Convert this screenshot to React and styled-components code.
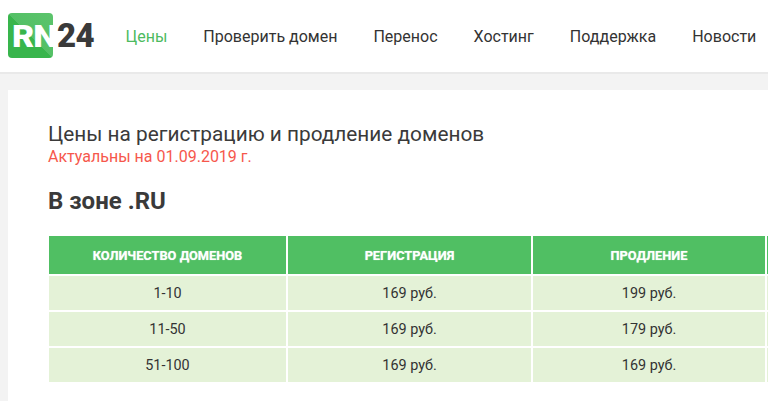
import styled, { createGlobalStyle } from "styled-components";

const GlobalStyle = createGlobalStyle`
  html, body {
    margin: 0;
    height: 401px;
    overflow: hidden;
    background: #f3f3f3;
    font-family: "Roboto", "Liberation Sans", sans-serif;
    color: #333;
  }
`;

const Header = styled.header`
  display: flex;
  align-items: center;
  height: 72px;
  padding-left: 8px;
  background: #fff;
  border-bottom: 2px solid #e9e9e9;
`;

const Logo = styled.a`
  display: flex;
  align-items: center;
  width: 118px;
  flex-shrink: 0;
  margin-top: -1px;
`;

const LogoMark = styled.span`
  display: block;
  width: 45px;
  height: 45px;
  padding: 8px 0 0 4px;
  box-sizing: border-box;
  border-radius: 4px;
  background: linear-gradient(45deg, #38b54c 0%, #38b54c 50%, #54c066 50%, #5cc46c 100%);
`;

const LogoLetters = styled.span`
  display: block;
  color: #fff;
  font-size: 31px;
  font-weight: 900;
  line-height: 31px;
  letter-spacing: -1px;
  white-space: nowrap;
  transform: scaleX(1.1);
  transform-origin: left center;
`;

const LogoDigits = styled.span`
  margin-left: 4px;
  color: #3a3a3a;
  font-size: 33px;
  font-weight: 900;
  letter-spacing: -0.7px;
`;

const Nav = styled.nav`
  display: flex;
  gap: 36px;
  margin-left: -0.5px;
  white-space: nowrap;
`;

const NavLink = styled.a`
  font-size: 16px;
  color: ${(p) => (p.$active ? "#4dbb5f" : "#333")};
`;

const Panel = styled.main`
  margin: 16px 0 0 8px;
  padding: 31px 0 0 40px;
  background: #fff;
  height: 320px;
`;

const Title = styled.div`
  font-size: 20.8px;
  line-height: 26px;
  color: #3a3a3a;
`;

const Updated = styled.div`
  font-size: 16px;
  line-height: 20px;
  color: #f6574c;
`;

const ZoneTitle = styled.h2`
  margin: 19px 0 20px;
  font-size: 24px;
  line-height: 30px;
  font-weight: 700;
  color: #3a3a3a;
`;

const PriceTable = styled.table`
  margin-left: -1px;
  width: 1000px;
  table-layout: fixed;
  border-collapse: separate;
  border-spacing: 2px;
  margin-top: -2px;
`;

const HeadCell = styled.th`
  height: 38px;
  padding: 0;
  background: #50bf63;
  color: #fff;
  font-size: 12.8px;
  font-weight: 700;
  text-transform: uppercase;
  text-align: center;
  text-shadow: 0 0 1px rgba(255, 255, 255, 0.7);
`;

const Cell = styled.td`
  height: 34px;
  padding: 0;
  background: #e4f2d7;
  color: #333;
  font-size: 14.4px;
  text-align: center;
`;

const nav = ["Проверить домен", "Перенос", "Хостинг", "Поддержка", "Новости"];

const rows = [
  ["1-10", "169 руб.", "199 руб."],
  ["11-50", "169 руб.", "179 руб."],
  ["51-100", "169 руб.", "169 руб."],
];

export default function App() {
  return (
    <>
      <GlobalStyle />
      <Header>
        <Logo>
          <LogoMark>
            <LogoLetters>RN</LogoLetters>
          </LogoMark>
          <LogoDigits>24</LogoDigits>
        </Logo>
        <Nav>
          <NavLink $active>Цены</NavLink>
          {nav.map((item) => (
            <NavLink key={item}>{item}</NavLink>
          ))}
        </Nav>
      </Header>
      <Panel>
        <Title>Цены на регистрацию и продление доменов</Title>
        <Updated>Актуальны на 01.09.2019 г.</Updated>
        <ZoneTitle>В зоне .RU</ZoneTitle>
        <PriceTable>
          <colgroup>
            <col width="237" />
            <col width="243" />
            <col width="232" />
            <col />
          </colgroup>
          <thead>
            <tr>
              <HeadCell>Количество доменов</HeadCell>
              <HeadCell>Регистрация</HeadCell>
              <HeadCell>Продление</HeadCell>
              <HeadCell />
            </tr>
          </thead>
          <tbody>
            {rows.map((row) => (
              <tr key={row[0]}>
                {row.map((val, i) => (
                  <Cell key={i}>{val}</Cell>
                ))}
                <Cell />
              </tr>
            ))}
          </tbody>
        </PriceTable>
      </Panel>
    </>
  );
}
